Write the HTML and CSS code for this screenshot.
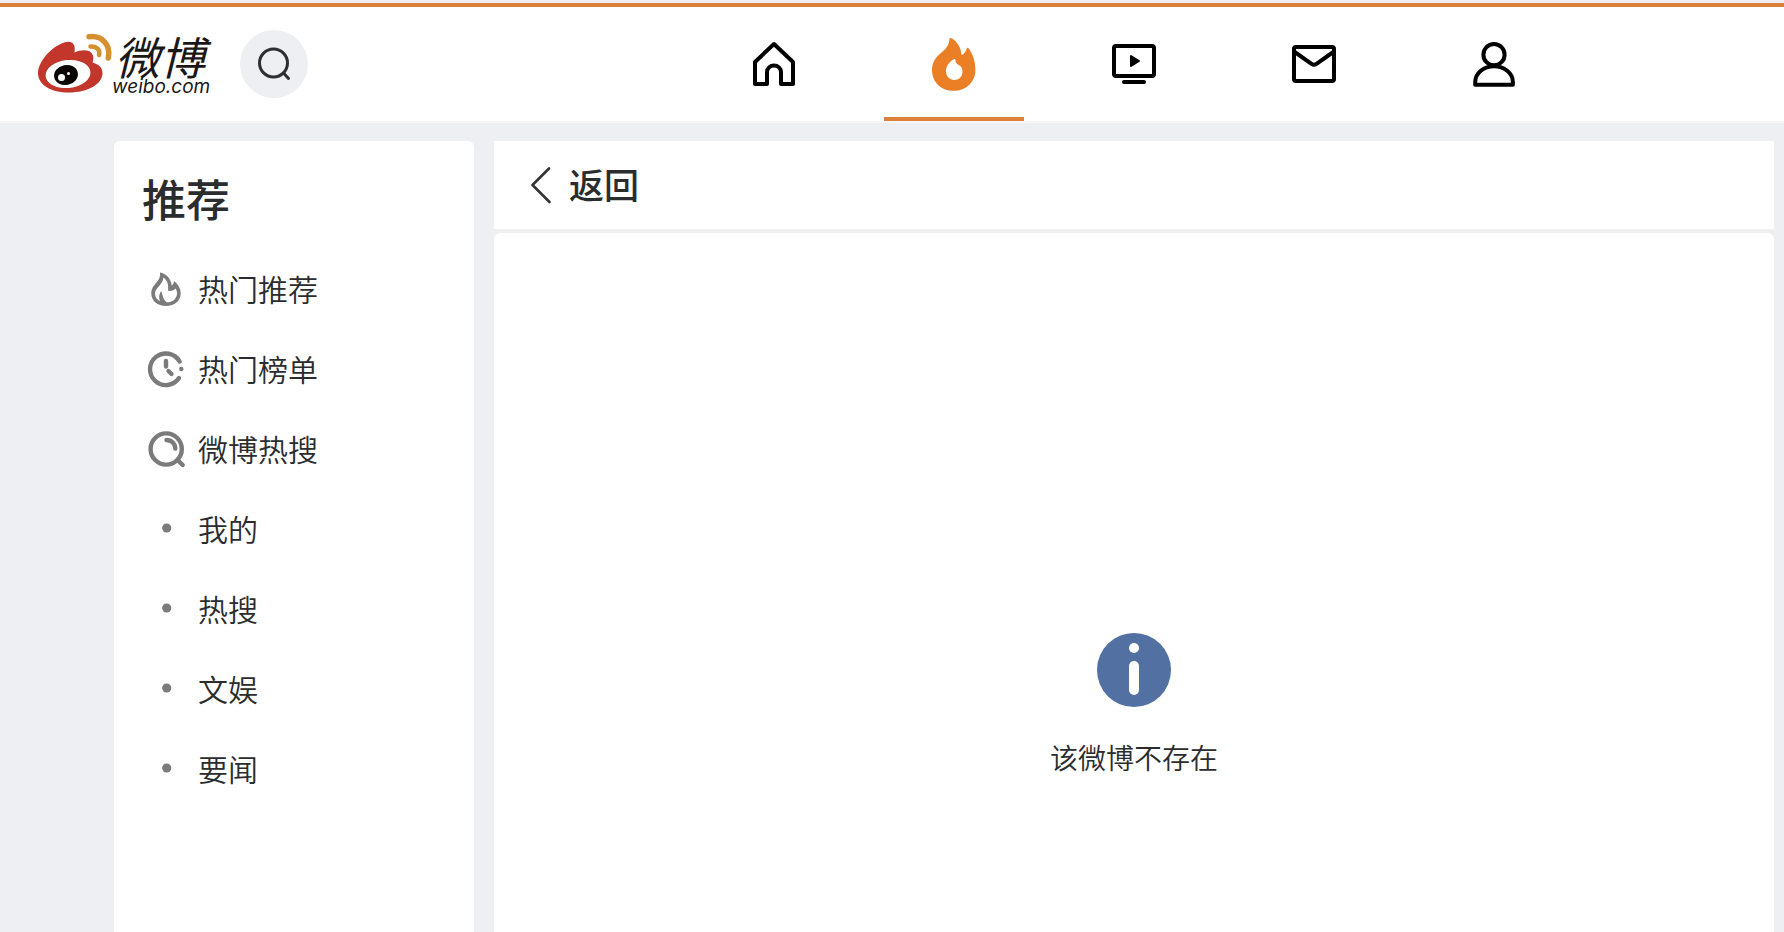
FILE: index.html
```html
<!DOCTYPE html>
<html lang="zh-CN">
<head>
<meta charset="utf-8">
<meta name="viewport" content="width=device-width, initial-scale=1">
<title>微博</title>
<link rel="stylesheet" href="styles.css">
</head>
<body>
<header class="topbar">
  <div class="brand">
    <a class="logo" href="#" aria-label="微博 weibo.com">
      <svg class="logo-art" width="184" height="68" viewBox="36 30 184 68">
        <path fill="#c2362b" d="M38 73C38 62 51 47 64 42.500C72 40 76 44 74.500 52.500C80 50 88 49 91.500 53C94 56 93.500 59 92.500 62.500C98 64 102.500 67 102.500 73C102.500 84 88 92.500 69 92.500C51 92.500 38 85 38 73Z"/>
        <ellipse cx="68" cy="74" rx="22.500" ry="14" fill="#fff" transform="rotate(-6 68 74)"/>
        <ellipse cx="66" cy="75" rx="12" ry="10" fill="#0b0707" transform="rotate(-12 66 75)"/>
        <circle cx="61.500" cy="77.500" r="3.500" fill="#fff"/>
        <circle cx="68.500" cy="73.500" r="1.500" fill="#fff"/>
        <path fill="none" stroke="#d5902f" stroke-width="5.500" stroke-linecap="round" d="M89 36.800C102 35 111 45 108.300 58"/>
        <path fill="none" stroke="#d5902f" stroke-width="4.500" stroke-linecap="round" d="M90.500 46.500C96.500 46 100.500 50 99 55"/>
        <text class="logo-name" x="115" y="75">微博</text>
        <text class="logo-site" x="112" y="93">weibo.com</text>
      </svg>
    </a>
    <button class="search" type="button" aria-label="搜索">
      <svg width="40" height="40" viewBox="254 44 40 40" fill="none" stroke="#2e2f31" stroke-width="3" stroke-linecap="round"><circle cx="273.500" cy="63" r="14"/><path d="M283.500 73L288.500 78.500"/></svg>
    </button>
  </div>
  <nav class="tabs" aria-label="主导航">
    <a class="tab" href="#" aria-label="首页">
      <svg width="60" height="60" viewBox="744 34 60 60" fill="none" stroke="#000" stroke-width="4" stroke-linejoin="round"><path d="M755 62L774 44L793 62V84H781V72A7 6.500 0 0 0 767 72V84H755Z"/></svg>
    </a>
    <a class="tab tab-active" href="#" aria-label="热门" aria-current="page">
      <svg width="60" height="60" viewBox="924 34 60 60"><path fill="#eb7f26" fill-rule="evenodd" d="M949.500 38.500C950 37.800 951 37.900 952 38.500C957 41.500 961 47 961.500 55C964.500 54 966 51 966.700 48.500C967 47.600 968 47.500 968.600 48.300C973 54 975.400 62 975.400 70C975.400 82 966 90.800 953.500 90.800C941 90.800 932 82 932 70C932 62 936 57 941 53C946.500 48.500 949 45 949.500 38.500ZM953.800 59.200C951 60.500 946 65 946 71C946 76.500 949.500 80 954.200 80C959 80 962.500 76.500 962.500 71.500C962.500 67 960 65.800 957.800 64.500C956 63.300 955.500 62 955.500 60C955.500 59.200 954.800 58.800 953.800 59.200Z"/></svg>
    </a>
    <a class="tab" href="#" aria-label="视频">
      <svg width="60" height="60" viewBox="1104 34 60 60" fill="none" stroke="#000" stroke-width="4" stroke-linecap="round"><rect x="1114" y="46" width="40" height="30" rx="2"/><path d="M1124 82H1144"/><path d="M1131 56V66L1139 61Z" fill="#000" stroke-width="2" stroke-linejoin="round"/></svg>
    </a>
    <a class="tab" href="#" aria-label="消息">
      <svg width="60" height="60" viewBox="1284 34 60 60" fill="none" stroke="#000" stroke-width="4" stroke-linejoin="round"><rect x="1294" y="47" width="40" height="34" rx="2"/><path d="M1294 51.500L1311.500 63.800Q1314 65.600 1316.500 63.800L1334 51.500"/></svg>
    </a>
    <a class="tab" href="#" aria-label="我">
      <svg width="60" height="60" viewBox="1464 34 60 60" fill="none" stroke="#000" stroke-width="4" stroke-linejoin="round"><circle cx="1494" cy="54.700" r="10.600"/><path d="M1475.200 84.700V82C1475.200 73 1484 66.300 1494 66.300S1512.900 73 1512.900 82V84.700Z"/></svg>
    </a>
  </nav>
</header>

<div class="page">
  <aside class="sidebar">
    <h2 class="sidebar-title">推荐</h2>
    <ul class="menu">
      <li><a class="menu-item" href="#">
        <svg class="menu-icon" width="40" height="40" viewBox="146 270 40 40"><path fill="#7b7b7b" fill-rule="evenodd" d="M160 272.500C166 273.500 171 278.500 171.700 285.500C173 284.500 173.700 283 174 281C178 284 180.700 288.500 180.700 293.500C180.700 301 174.500 306 166 306C157.500 306 151.300 301 151.300 293.500C151.300 288 154 285.500 156.500 282.500C159 279.500 160.500 277 160 272.500ZM163.500 277.500C163 281.500 161 284 158.700 286.500C156.500 289 155 291 155 293.800C155 297 157 299.800 160 301.200C158.500 297.500 159 294 161.200 291C162.700 294 162.300 298.500 166.500 302.300C172.500 302.300 177 298.800 177 293.500C177 291.500 176.500 290 175.700 288.500C174 290.300 171.500 291.300 168 290.800C168.800 285 167.500 280.500 163.500 277.500Z"/></svg>
        <span class="menu-label">热门推荐</span></a></li>
      <li><a class="menu-item" href="#">
        <svg class="menu-icon" width="40" height="40" viewBox="146 350 40 40" fill="none" stroke="#7b7b7b" stroke-width="4.400" stroke-linecap="round"><path d="M179.600 361.500A15.800 15.800 0 1 0 179 378"/><path d="M166 361V366.500M168.500 371L171.500 374"/><circle cx="181.300" cy="369" r="2.200" fill="#7b7b7b" stroke="none"/></svg>
        <span class="menu-label">热门榜单</span></a></li>
      <li><a class="menu-item" href="#">
        <svg class="menu-icon" width="40" height="40" viewBox="146 430 40 40" fill="none" stroke="#7b7b7b" stroke-width="4.400" stroke-linecap="round"><circle cx="166.200" cy="449" r="15.600"/><path d="M178 460.500L182.700 465M166.500 440C171.500 440 175.300 444 175.300 448.500"/></svg>
        <span class="menu-label">微博热搜</span></a></li>
      <li><a class="menu-item" href="#"><svg class="menu-icon" width="40" height="40" viewBox="0 0 40 40"><circle cx="20.700" cy="18" r="4.600" fill="#7b7b7b"/></svg><span class="menu-label">我的</span></a></li>
      <li><a class="menu-item" href="#"><svg class="menu-icon" width="40" height="40" viewBox="0 0 40 40"><circle cx="20.700" cy="18" r="4.600" fill="#7b7b7b"/></svg><span class="menu-label">热搜</span></a></li>
      <li><a class="menu-item" href="#"><svg class="menu-icon" width="40" height="40" viewBox="0 0 40 40"><circle cx="20.700" cy="18" r="4.600" fill="#7b7b7b"/></svg><span class="menu-label">文娱</span></a></li>
      <li><a class="menu-item" href="#"><svg class="menu-icon" width="40" height="40" viewBox="0 0 40 40"><circle cx="20.700" cy="18" r="4.600" fill="#7b7b7b"/></svg><span class="menu-label">要闻</span></a></li>
    </ul>
  </aside>
  <main class="content">
    <div class="back-bar">
      <button class="back" type="button">
        <svg width="20" height="40" viewBox="531 165 20 40" fill="none" stroke="#333" stroke-width="2.600" stroke-linecap="round" stroke-linejoin="round"><path d="M549 168.500L532.500 185L549.500 202"/></svg>
        <span class="back-label">返回</span>
      </button>
    </div>
    <section class="notice">
      <svg width="74" height="74" viewBox="0 0 74 74"><circle cx="37" cy="37" r="37" fill="#5270a2"/><circle cx="37" cy="15" r="5" fill="#fff"/><rect x="32" y="28" width="10" height="34" rx="5" fill="#fff"/></svg>
      <p class="notice-text">该微博不存在</p>
    </section>
  </main>
</div>
</body>
</html>
```
FILE: styles.css
```css
* {
  box-sizing: border-box;
}

body {
  display: flex;
  flex-direction: column;
  min-height: 100vh;
  margin: 0;
  padding-top: 3px;
  background: #edeff3;
  color: #2b2c2e;
  font-family: "Noto Sans CJK SC", "Noto Sans", sans-serif;
}

a {
  color: inherit;
  text-decoration: none;
}

button {
  padding: 0;
  border: 0;
  color: inherit;
  font: inherit;
  cursor: pointer;
}

svg {
  display: block;
  flex: none;
}

.topbar {
  display: grid;
  grid-template-columns: 494px 1fr;
  height: 120px;
  padding-right: 10px;
  border-top: 4px solid #dd8039;
  border-bottom: 2px solid #f6f6f8;
  background: #fff;
}

.brand {
  display: flex;
  align-items: center;
  gap: 20px;
  padding-left: 36px;
}

.logo-art {
  overflow: visible;
}

.logo-name {
  fill: #1a1715;
  font-size: 45px;
  font-style: italic;
  font-weight: 400;
}

.logo-site {
  fill: #1a1715;
  font-family: Inter, "Liberation Sans", Arial, sans-serif;
  font-size: 19px;
  font-style: italic;
}

.search {
  display: grid;
  place-items: center;
  width: 68px;
  height: 68px;
  border-radius: 50%;
  background: #edeff3;
}

.tabs {
  display: flex;
  justify-content: center;
  gap: 40px;
}

.tab {
  display: grid;
  place-items: center;
  width: 140px;
}

.tab-active {
  box-shadow: inset 0 -4px #dd8039;
}

.page {
  display: grid;
  flex: 1;
  grid-template-columns: 360px 1fr;
  gap: 20px;
  padding: 18px 10px 0 114px;
}

.sidebar {
  padding: 25px 28px;
  border-radius: 6px 6px 0 0;
  background: #fff;
}

.sidebar-title {
  margin: 0 0 20px;
  font-size: 44px;
  font-weight: 500;
  line-height: 64px;
}

.menu {
  margin: 0;
  padding: 0;
  list-style: none;
}

.menu-item {
  display: flex;
  align-items: center;
  gap: 12px;
  height: 80px;
  padding-left: 4px;
  font-size: 30px;
  font-weight: 350;
  line-height: 40px;
}

.menu-label {
  padding-bottom: 4px;
}

.content {
  display: flex;
  flex-direction: column;
  gap: 4px;
  background: #efefef;
}

.back-bar {
  display: flex;
  align-items: center;
  height: 88px;
  padding: 0 37px;
  background: #fff;
}

.back {
  display: flex;
  align-items: center;
  gap: 18px;
  background: none;
  font-size: 35px;
  font-weight: 500;
  line-height: 48px;
}

.back-label {
  padding-bottom: 2px;
}

.notice {
  display: flex;
  flex: 1;
  flex-direction: column;
  align-items: center;
  gap: 30px;
  padding: 400px 20px 40px;
  border-radius: 6px 6px 0 0;
  background: #fff;
}

.notice-text {
  margin: 0;
  font-size: 28px;
  font-weight: 350;
  line-height: 40px;
}
```
